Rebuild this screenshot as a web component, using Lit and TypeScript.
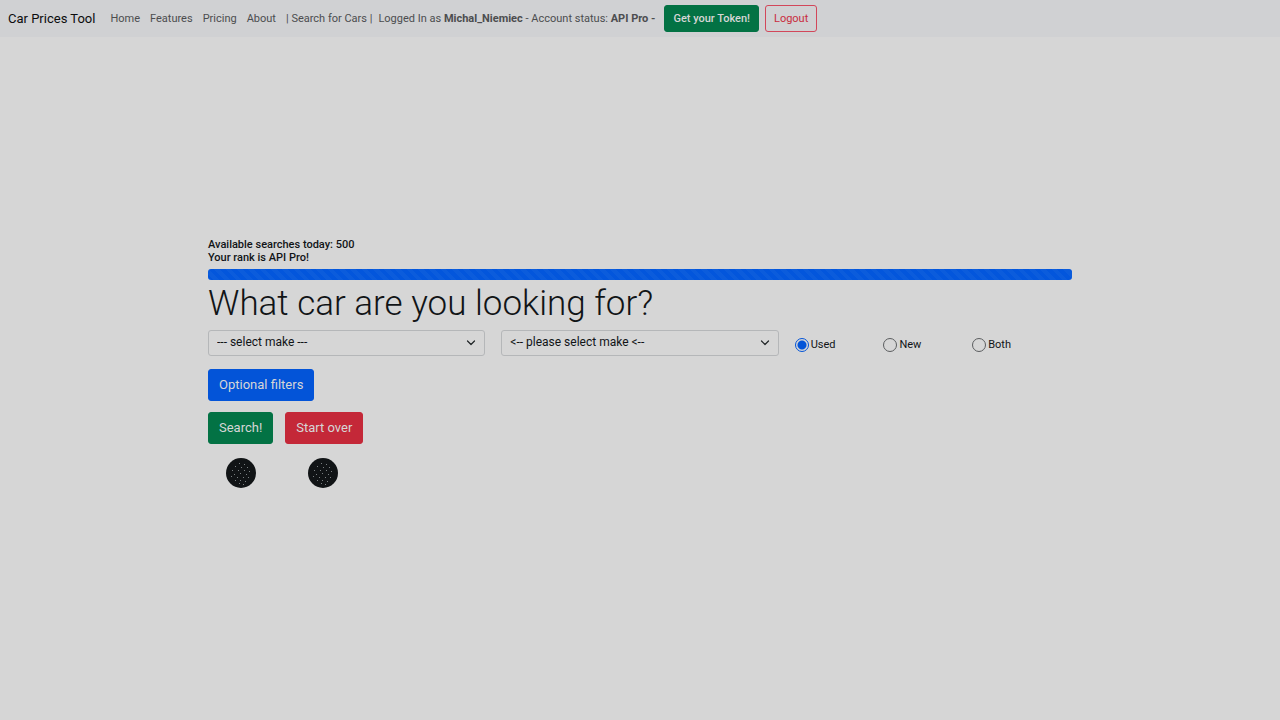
import { LitElement, html, css, svg } from "lit";
import { customElement, state } from "lit/decorators.js";

const CONDITIONS = ["Used", "New", "Both"];

// Bright specks scattered over the dark discs.
const SPECKS = [
  [13, 5], [18, 6], [9, 8], [15, 9], [21, 9], [6, 12], [12, 12], [18, 12], [23, 13],
  [8, 16], [14, 15], [20, 16], [5, 18], [11, 19], [17, 19], [22, 19], [9, 22],
  [14, 22], [19, 23], [13, 25], [17, 26],
];

@customElement("speck-disc")
export class SpeckDisc extends LitElement {
  static styles = css`
    :host {
      display: block;
      width: 30px;
      height: 30px;
    }
    .disc {
      display: block;
    }
  `;

  render() {
    return html`<svg class="disc" viewBox="0 0 30 30" width="30" height="30" aria-hidden="true">
      <circle cx="15" cy="15" r="15" fill="#111416" />
      ${SPECKS.map(([x, y]) => svg`<rect x=${x} y=${y} width="1" height="1" fill="#7b8082" />`)}
    </svg>`;
  }
}

@customElement("app-root")
export class AppRoot extends LitElement {
  static styles = css`
    :host {
      display: flex;
      flex-direction: column;
      min-height: 100vh;
      background: #d6d6d6;
      color: #111416;
      font-family: Roboto, "Liberation Sans", sans-serif;
      font-size: 11px;
      line-height: 13px;
    }
    * {
      box-sizing: border-box;
    }
    .navbar {
      display: flex;
      align-items: center;
      min-height: 37px;
      padding: 5px 8px;
      background: #d0d1d3;
      color: #4c4d4f;
    }
    .brand {
      margin-right: 15px;
      color: #0b0c0d;
      font-size: 13px;
      line-height: 20px;
      text-decoration: none;
    }
    .links {
      display: flex;
      gap: 10px;
      margin-right: 6px;
    }
    .link {
      color: inherit;
      text-decoration: none;
    }
    .status {
      margin-right: 9px;
    }
    .btn {
      border: 1px solid transparent;
      border-radius: 3px;
      padding: 5px 10px;
      font: inherit;
      font-size: 13px;
      line-height: 20px;
      color: #d6d6d6;
      cursor: pointer;
    }
    .small {
      padding: 5px 8px;
      font-size: 11px;
      line-height: 15px;
    }
    .green {
      background: #037244;
      border-color: #037244;
    }
    .token {
      margin-right: 6px;
      font-weight: 500;
    }
    .outline {
      background: transparent;
      border-color: #d2475a;
      color: #c92c40;
    }
    .blue {
      background: #0354d8;
      border-color: #0354d8;
    }
    .red {
      background: #c42838;
      border-color: #c42838;
    }
    .main {
      flex: 1;
      display: flex;
      flex-direction: column;
      justify-content: center;
      width: 67.5%;
      margin: 0 auto;
      padding-bottom: 32px;
    }
    .quota {
      margin: 0;
      font-weight: 500;
    }
    .bar {
      height: 11px;
      margin: 5px 0 3px;
      border-radius: 3px;
      background: repeating-linear-gradient(45deg, #0356dc 0 4px, #0b5cdc 4px 8px);
    }
    .title {
      margin: 0 0 5px;
      font-size: 35px;
      font-weight: 300;
      line-height: 42px;
    }
    .row {
      display: grid;
      grid-template-columns: repeat(3, 1fr);
      gap: 16px;
      align-items: center;
    }
    .field {
      position: relative;
      display: flex;
    }
    .select {
      appearance: none;
      width: 100%;
      height: 26px;
      padding: 0 28px 0 8px;
      border: 1px solid #b5b7b9;
      border-radius: 3px;
      background: #d6d6d6;
      color: #111416;
      font: inherit;
      font-size: 12px;
    }
    .chevron {
      position: absolute;
      right: 9px;
      top: 8px;
      pointer-events: none;
    }
    .radios {
      display: grid;
      grid-template-columns: repeat(3, 1fr);
      margin: 4px 0 0;
      padding: 0 11px 0 0;
      border: 0;
      min-width: 0;
    }
    .radio {
      display: flex;
      align-items: center;
      gap: 2px;
    }
    .dot {
      appearance: none;
      width: 14px;
      height: 14px;
      margin: 0;
      border: 1px solid #5b5d5f;
      border-radius: 50%;
    }
    .dot:checked {
      border-color: #0354d8;
      background: radial-gradient(circle, #0354d8 4px, transparent 5px);
    }
    .actions {
      display: flex;
      gap: 12px;
      margin-top: 11px;
    }
    .filters {
      margin-top: 13px;
    }
    .discs {
      display: flex;
      gap: 52px;
      margin-top: 14px;
      padding-left: 18px;
    }
  `;

  @state() private condition = "Used";

  private select(id: string, label: string, text: string) {
    return html`<div class="field">
      <select class="select" id=${id} aria-label=${label}>
        <option>${text}</option>
      </select>
      <svg class="chevron" width="10" height="10" viewBox="0 0 10 10" aria-hidden="true">
        <path d="M1.5 3l3.5 3.5L8.5 3" fill="none" stroke="#212527" stroke-width="1.2" stroke-linecap="round" stroke-linejoin="round" />
      </svg>
    </div>`;
  }

  render() {
    return html`
      <nav class="navbar">
        <a class="brand" href="#">Car Prices Tool</a>
        <div class="links">
          <a class="link" href="#">Home</a>
          <a class="link" href="#">Features</a>
          <a class="link" href="#">Pricing</a>
          <a class="link" href="#">About</a>
          <a class="link" href="#">| Search for Cars |</a>
        </div>
        <span class="status">Logged In as <b>Michal_Niemiec</b> - Account status: <b>API Pro -</b></span>
        <button class="btn small green token">Get your Token!</button>
        <button class="btn small outline">Logout</button>
      </nav>
      <main class="main">
        <p class="quota">Available searches today: 500</p>
        <p class="quota">Your rank is API Pro!</p>
        <div class="bar" role="progressbar" aria-label="Searches left" aria-valuenow="100"></div>
        <h1 class="title">What car are you looking for?</h1>
        <div class="row">
          ${this.select("make", "Make", "--- select make ---")}
          ${this.select("model", "Model", "<-- please select make <--")}
          <fieldset class="radios" aria-label="Condition">
            ${CONDITIONS.map(
              (c) => html`<label class="radio">
                <input class="dot" type="radio" name="condition" .checked=${this.condition === c}
                  @change=${() => (this.condition = c)} />${c}
              </label>`,
            )}
          </fieldset>
        </div>
        <div class="actions filters"><button class="btn blue">Optional filters</button></div>
        <div class="actions">
          <button class="btn green">Search!</button>
          <button class="btn red">Start over</button>
        </div>
        <div class="discs"><speck-disc></speck-disc><speck-disc></speck-disc></div>
      </main>
    `;
  }
}
